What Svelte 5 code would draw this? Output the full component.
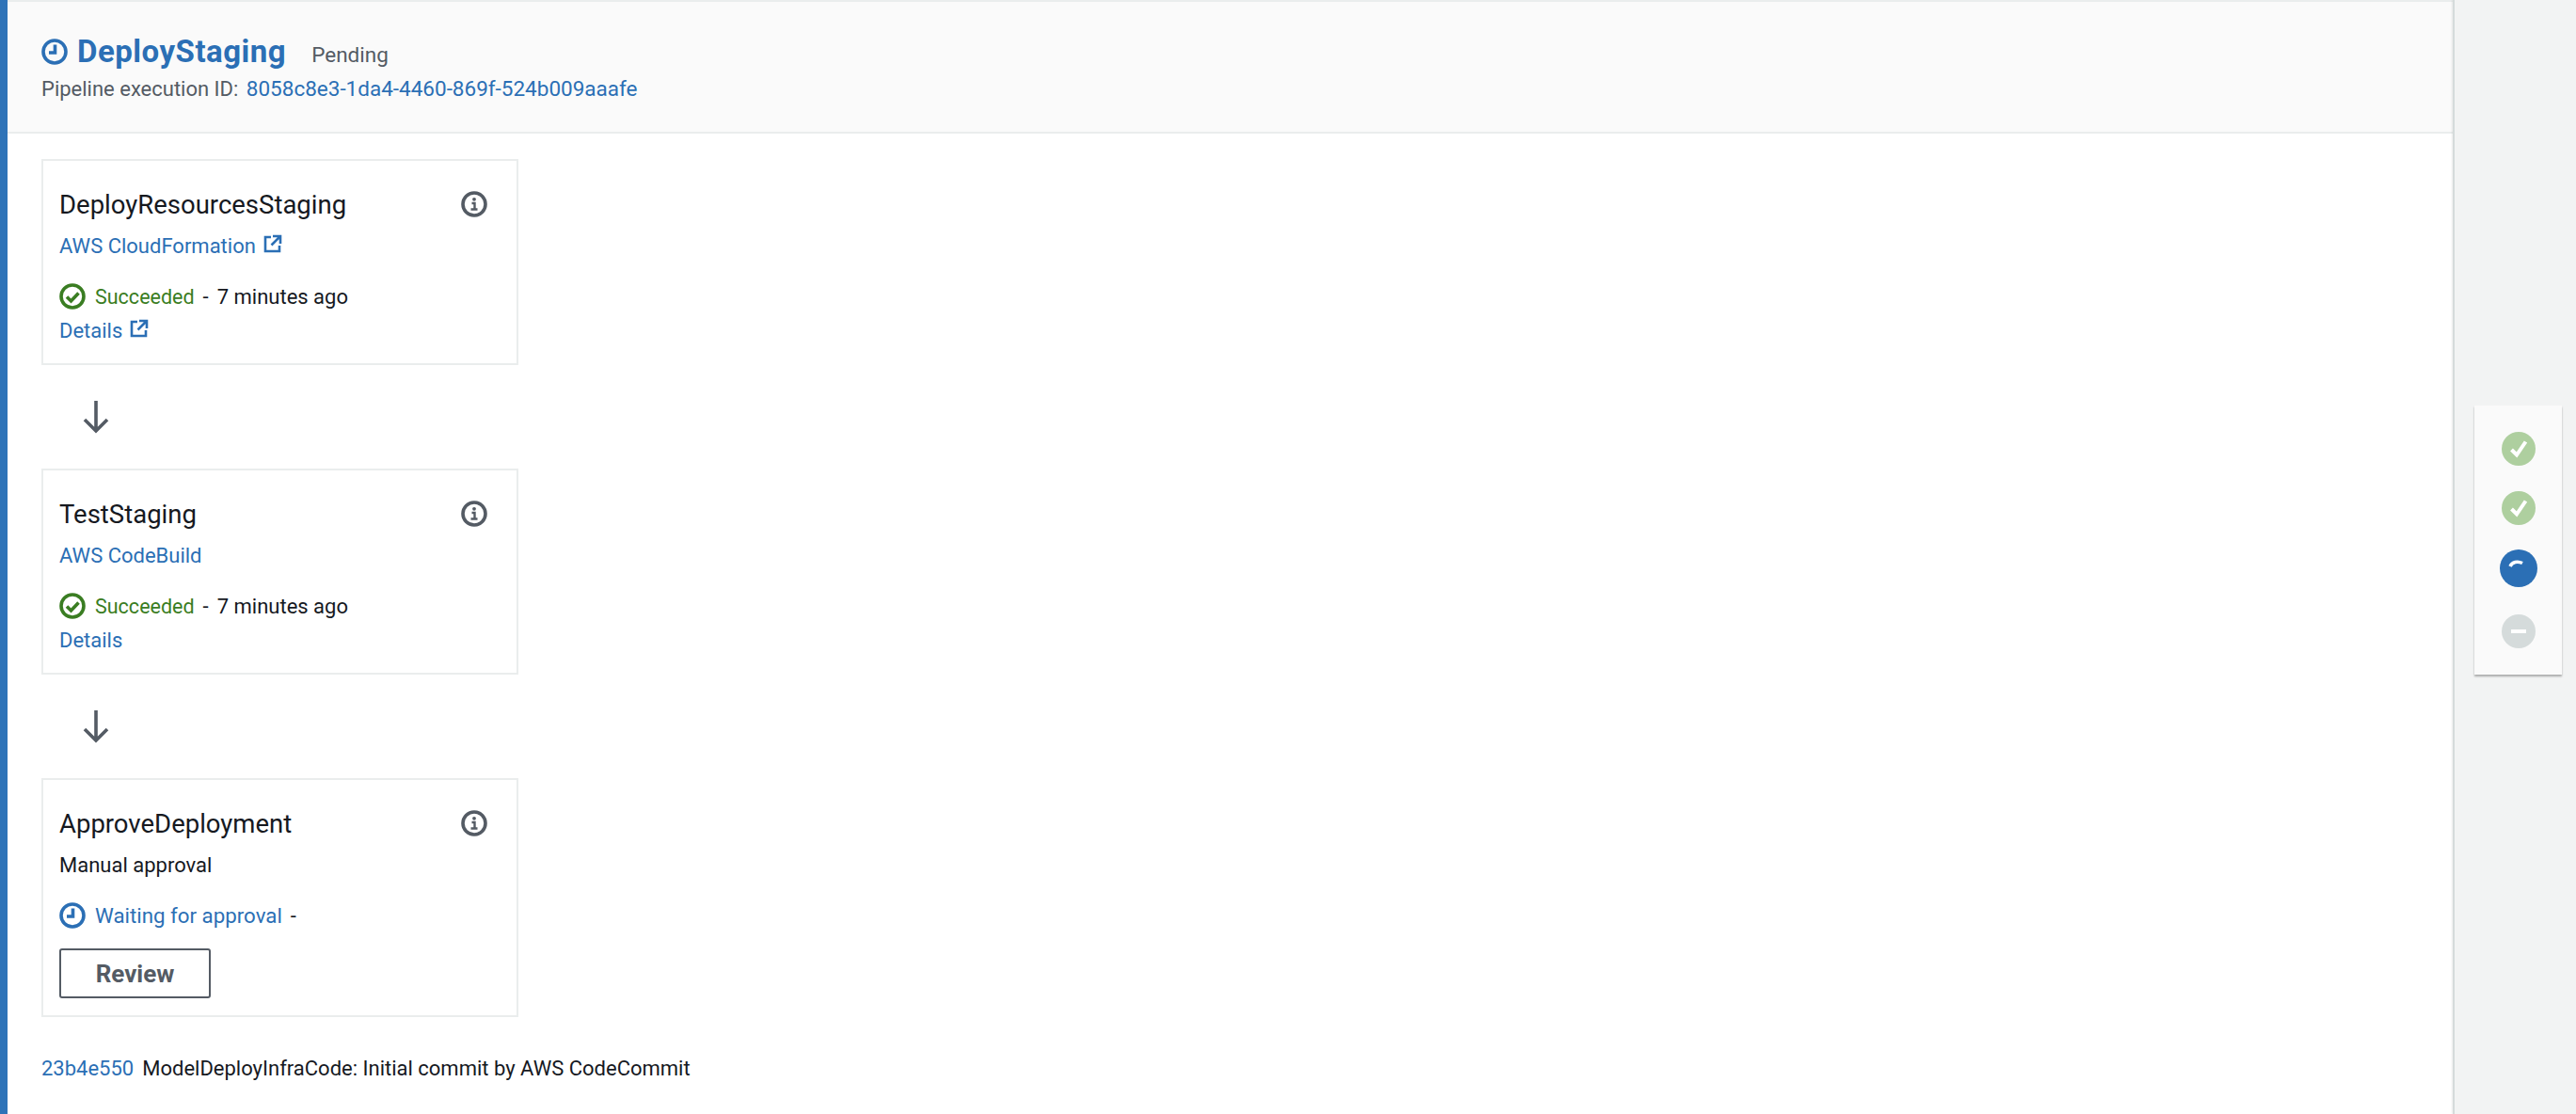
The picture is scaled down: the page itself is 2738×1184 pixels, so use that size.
<script>
	const actions = [
		{
			name: 'DeployResourcesStaging',
			provider: 'AWS CloudFormation',
			providerLink: true,
			external: true,
			status: 'Succeeded',
			time: '7 minutes ago',
			details: true
		},
		{
			name: 'TestStaging',
			provider: 'AWS CodeBuild',
			providerLink: true,
			external: false,
			status: 'Succeeded',
			time: '7 minutes ago',
			details: true
		},
		{
			name: 'ApproveDeployment',
			provider: 'Manual approval',
			providerLink: false,
			external: false,
			status: 'Waiting for approval',
			time: '',
			details: false
		}
	];
</script>

{#snippet clock(cls)}
	<svg class={cls} viewBox="0 0 28 28" fill="none" stroke="currentColor" stroke-width="3.6">
		<circle cx="14" cy="14" r="12" />
		<path d="M14.5 6.500v8.500H8" />
	</svg>
{/snippet}

{#snippet externalIcon()}
	<svg class="ext" viewBox="0 0 20 20" fill="none" stroke="currentColor" stroke-width="2.6">
		<path d="M8 3H2v15h15v-6" />
		<path d="M10 2h8v8M18 2L8.500 11.500" />
	</svg>
{/snippet}

<div class="page">
	<main class="main">
		<header class="stage-head">
			<div class="title-row">
				{@render clock('title-icon')}
				<h1>DeployStaging</h1>
				<span class="pending">Pending</span>
			</div>
			<div class="exec">
				Pipeline execution ID:
				<a href="#top">8058c8e3-1da4-4460-869f-524b009aaafe</a>
			</div>
		</header>

		<section class="content">
			{#each actions as action, i}
				{#if i > 0}
					<div class="arrow-row">
						<svg viewBox="0 0 28 36" fill="none" stroke="#545b64" stroke-width="3.600">
							<path d="M14 1v32M2 21l12 12 12-12" />
						</svg>
					</div>
				{/if}
				<div class="card">
					<div class="card-head">
						<span class="action-name">{action.name}</span>
						<svg class="info" viewBox="0 0 28 28" fill="none">
							<circle cx="14" cy="14" r="12" stroke="#545b64" stroke-width="3.600" />
							<circle cx="14" cy="8.800" r="1.900" fill="#545b64" />
							<path d="M11.500 13h3v6M10.500 19.500h7" stroke="#545b64" stroke-width="2.400" />
						</svg>
					</div>
					<div class="provider">
						{#if action.providerLink}
							<a href="#top">{action.provider}</a>
							{#if action.external}{@render externalIcon()}{/if}
						{:else}
							{action.provider}
						{/if}
					</div>
					<div class="status">
						{#if action.status === 'Succeeded'}
							<svg class="status-icon" viewBox="0 0 28 28" fill="none" stroke="#3a7d22" stroke-width="3.600">
								<circle cx="14" cy="14" r="12" />
								<path d="M8 14.500l4.500 4.500 8-8.500" />
							</svg>
							<span class="ok">{action.status}</span>
						{:else}
							<span class="waiting-icon">{@render clock('status-icon')}</span>
							<span class="waiting">{action.status}</span>
						{/if}
						<span class="dash">-</span>
						{#if action.time}<span>{action.time}</span>{/if}
					</div>
					{#if action.details}
						<div class="details">
							<a href="#top">Details</a>
							{#if action.external}{@render externalIcon()}{/if}
						</div>
					{:else}
						<button class="review">Review</button>
					{/if}
				</div>
			{/each}
			<div class="commit">
				<a href="#top">23b4e550</a>
				<span>ModelDeployInfraCode: Initial commit by AWS CodeCommit</span>
			</div>
		</section>
	</main>

	<aside class="rail">
		<div class="stage-nav">
			<span class="dot done">
				<svg viewBox="0 0 36 36" fill="none" stroke="#fff" stroke-width="4"><path d="M10.500 19l5.500 5.500L25.500 10.500" /></svg>
			</span>
			<span class="dot done">
				<svg viewBox="0 0 36 36" fill="none" stroke="#fff" stroke-width="4"><path d="M10.500 19l5.500 5.500L25.500 10.500" /></svg>
			</span>
			<span class="dot active">
				<svg viewBox="0 0 40 40" fill="none" stroke="#fff" stroke-width="3.500"><path d="M11 18c2-5 8-6 13-3.500" /></svg>
			</span>
			<span class="dot off">
				<svg viewBox="0 0 36 36" fill="none" stroke="#fff" stroke-width="4"><path d="M10 18h16" /></svg>
			</span>
		</div>
	</aside>
</div>

<style>
	:global(body) {
		margin: 0;
		background: #fff;
	}

	.page {
		display: flex;
		height: 1184px;
		overflow: hidden;
		font-family: Roboto, sans-serif;
		font-size: 22px;
		color: #16191f;
	}

	a {
		color: #2b6fb5;
		text-decoration: none;
	}

	.main {
		width: 2607px;
		flex-shrink: 0;
		box-sizing: border-box;
		border-left: 8px solid #2e73b8;
	}

	.stage-head {
		box-sizing: border-box;
		height: 142px;
		padding: 33px 36px 0;
		background: #fafafa;
		border-top: 2px solid #eaeded;
		border-bottom: 2px solid #eaeded;
	}

	.title-row {
		display: flex;
		align-items: center;
		height: 40px;
	}

	.title-icon {
		width: 28px;
		height: 28px;
		color: #2b6fb5;
		margin-right: 10px;
	}

	h1 {
		margin: 0;
		font-size: 33px;
		font-weight: 700;
		letter-spacing: 0.5px;
		line-height: 40px;
		color: #2b6fb5;
	}

	.pending {
		margin-left: 27px;
		font-size: 22.5px;
		color: #545b64;
		padding-top: 5px;
	}

	.exec {
		margin-top: 4px;
		line-height: 30px;
		color: #545b64;
	}

	.exec a {
		margin-left: 3px;
		font-size: 22.5px;
	}

	.content {
		padding: 27px 36px 0;
	}

	.card {
		box-sizing: border-box;
		width: 507px;
		padding: 26px 17px 20px;
		border: 2px solid #eaeded;
	}

	.card-head {
		display: flex;
		align-items: center;
		justify-content: space-between;
		height: 40px;
		padding-right: 14px;
	}

	.action-name {
		font-size: 27.5px;
	}

	.info {
		width: 28px;
		height: 28px;
	}

	.provider {
		display: flex;
		align-items: center;
		gap: 8px;
		margin-top: 9px;
		height: 30px;
	}

	.ext {
		width: 20px;
		height: 20px;
		color: #2b6fb5;
		margin-top: -4px;
	}

	.status {
		display: flex;
		align-items: center;
		height: 32px;
		margin-top: 23px;
	}

	.status-icon {
		width: 28px;
		height: 28px;
	}

	.waiting-icon {
		display: flex;
		color: #2b6fb5;
	}

	.ok {
		margin-left: 10px;
		font-size: 21.5px;
		color: #3a7d22;
	}

	.waiting {
		margin-left: 10px;
		font-size: 22.3px;
		color: #2b6fb5;
	}

	.dash {
		margin: 0 9px;
	}

	.details {
		display: flex;
		align-items: center;
		gap: 8px;
		height: 30px;
		margin-top: 5px;
	}

	.review {
		display: block;
		width: 161px;
		height: 53px;
		margin-top: 19px;
		margin-bottom: -2px;
		padding: 0;
		background: #fff;
		border: 2px solid #545b64;
		border-radius: 3px;
		font-family: inherit;
		font-size: 26px;
		font-weight: 700;
		color: #545b64;
	}

	.arrow-row {
		display: flex;
		align-items: center;
		height: 110px;
		padding-left: 44px;
	}

	.arrow-row svg {
		width: 28px;
		height: 36px;
	}

	.commit {
		display: flex;
		gap: 9px;
		margin-top: 40px;
		line-height: 30px;
	}

	.rail {
		flex: 1;
		padding: 431px 15px 0 21px;
		background: #f2f3f3;
		border-left: 2px solid #d5dbdb;
		box-shadow: -1px 0 2px rgba(0, 0, 0, 0.08);
	}

	.stage-nav {
		display: flex;
		flex-direction: column;
		align-items: center;
		box-sizing: border-box;
		height: 286px;
		padding-top: 28px;
		background: #fafafa;
		box-shadow: 0 2px 2px rgba(0, 0, 0, 0.3);
	}

	.dot {
		display: block;
		width: 36px;
		height: 36px;
		border-radius: 50%;
		margin-bottom: 27px;
	}

	.dot svg {
		display: block;
		width: 100%;
		height: 100%;
	}

	.done {
		background: #aecf9f;
	}

	.active {
		width: 40px;
		height: 40px;
		background: #2b6fb5;
		margin-top: -1px;
		margin-bottom: 29px;
	}

	.off {
		background: #d5dbdb;
	}
</style>
